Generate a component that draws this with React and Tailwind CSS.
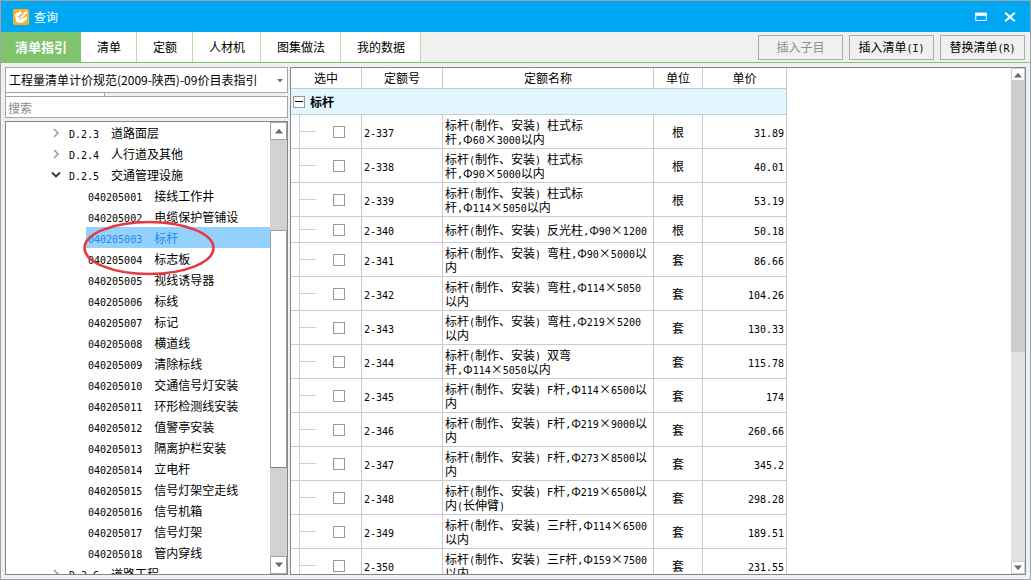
import React, { useState } from "react";

const tabs = ["清单指引", "清单", "定额", "人材机", "图集做法", "我的数据"];

const tree = [
  { code: "D.2.3", name: "道路面层" },
  { code: "D.2.4", name: "人行道及其他" },
  {
    code: "D.2.5",
    name: "交通管理设施",
    children: [
      ["040205001", "接线工作井"],
      ["040205002", "电缆保护管铺设"],
      ["040205003", "标杆"],
      ["040205004", "标志板"],
      ["040205005", "视线诱导器"],
      ["040205006", "标线"],
      ["040205007", "标记"],
      ["040205008", "横道线"],
      ["040205009", "清除标线"],
      ["040205010", "交通信号灯安装"],
      ["040205011", "环形检测线安装"],
      ["040205012", "值警亭安装"],
      ["040205013", "隔离护栏安装"],
      ["040205014", "立电杆"],
      ["040205015", "信号灯架空走线"],
      ["040205016", "信号机箱"],
      ["040205017", "信号灯架"],
      ["040205018", "管内穿线"],
    ],
  },
  { code: "D.2.6", name: "道路工程" },
];

const rows = [
  ["2-337", "标杆(制作、安装) 柱式标\n杆,Φ60×3000以内", "根", "31.89"],
  ["2-338", "标杆(制作、安装) 柱式标\n杆,Φ90×5000以内", "根", "40.01"],
  ["2-339", "标杆(制作、安装) 柱式标\n杆,Φ114×5050以内", "根", "53.19"],
  ["2-340", "标杆(制作、安装) 反光柱,Φ90×1200", "根", "50.18"],
  ["2-341", "标杆(制作、安装) 弯柱,Φ90×5000以\n内", "套", "86.66"],
  ["2-342", "标杆(制作、安装) 弯柱,Φ114×5050\n以内", "套", "104.26"],
  ["2-343", "标杆(制作、安装) 弯柱,Φ219×5200\n以内", "套", "130.33"],
  ["2-344", "标杆(制作、安装) 双弯\n杆,Φ114×5050以内", "套", "115.78"],
  ["2-345", "标杆(制作、安装) F杆,Φ114×6500以\n内", "套", "174"],
  ["2-346", "标杆(制作、安装) F杆,Φ219×9000以\n内", "套", "260.66"],
  ["2-347", "标杆(制作、安装) F杆,Φ273×8500以\n内", "套", "345.2"],
  ["2-348", "标杆(制作、安装) F杆,Φ219×6500以\n内(长伸臂)", "套", "298.28"],
  ["2-349", "标杆(制作、安装) 三F杆,Φ114×6500\n以内", "套", "189.51"],
  ["2-350", "标杆(制作、安装) 三F杆,Φ159×7500\n以内", "套", "231.55"],
];

// Half-width runs are set in a monospaced face, half as wide as a Chinese character.
function Mixed({ text }) {
  return text.split(/([\x20-\x7e]+)/).map((part, i) =>
    i % 2 ? (
      <span key={i} className="font-['DejaVu_Sans_Mono',monospace] text-[10px] leading-none">
        {part}
      </span>
    ) : (
      part
    )
  );
}

function Arrow({ up }) {
  return (
    <svg viewBox="0 0 10 6" className="h-[6px] w-[10px]" fill="#6b6b6b" aria-hidden="true">
      <path d={up ? "M1 5.5 5 .8 9 5.5z" : "M1 .5 5 5.2 9 .5z"} />
    </svg>
  );
}

function Chevron({ open }) {
  return (
    <svg viewBox="0 0 10 10" className="h-[10px] w-[10px]" fill="none" aria-hidden="true">
      {open ? (
        <path d="M1 2.5 5 6.5 9 2.5" stroke="#333" strokeWidth="1.8" />
      ) : (
        <path d="M3 1 7 5 3 9" stroke="#999" strokeWidth="1.5" />
      )}
    </svg>
  );
}

function ToolButton({ children, disabled }) {
  return (
    <button
      disabled={disabled}
      className="h-[25px] w-[85px] border border-[#adadad] bg-[#f0f0f0] text-black disabled:text-[#8f8f8f]"
    >
      {children}
    </button>
  );
}

function TreePanel() {
  const [selected, setSelected] = useState("040205003");
  return (
    <div className="relative mt-[3px] flex min-h-0 flex-1 border border-[#828790] bg-white">
      <ul className="min-w-0 flex-1 overflow-hidden">
        {tree.map((node) => (
          <li key={node.code}>
            <button className="flex h-[21px] w-full items-center pl-[45px] whitespace-nowrap">
              <Chevron open={!!node.children} />
              <span className="ml-2">
                <Mixed text={node.code} />
              </span>
              <span className="ml-3">{node.name}</span>
            </button>
            {node.children && (
              <ul className="pl-20">
                {node.children.map(([code, name]) => (
                  <li key={code}>
                    <button
                      onClick={() => setSelected(code)}
                      className={
                        code === selected
                          ? "flex h-[21px] w-full items-center gap-3 bg-[#94d1ff] pl-[2px] whitespace-nowrap text-[#1a8cf0]"
                          : "flex h-[21px] w-full items-center gap-3 pl-[2px] whitespace-nowrap"
                      }
                    >
                      <span>
                        <Mixed text={code} />
                      </span>
                      <span>{name}</span>
                    </button>
                  </li>
                ))}
              </ul>
            )}
          </li>
        ))}
      </ul>
      <div className="flex w-[17px] shrink-0 flex-col bg-[#d2d2d2]">
        <button aria-label="向上滚动" className="flex h-[18px] items-center justify-center border border-[#a5a5a5] bg-white">
          <Arrow up />
        </button>
        <div className="flex-[91]" />
        <div className="flex-[237] border border-[#a0a0a0] border-b-[#808080] bg-white" />
        <div className="flex-[89]" />
        <button aria-label="向下滚动" className="flex h-[18px] items-center justify-center border border-[#a5a5a5] bg-white">
          <Arrow />
        </button>
      </div>
      <svg
        viewBox="0 0 134 56"
        className="pointer-events-none absolute top-[98px] left-[76px] h-[56px] w-[134px]"
        fill="none"
        aria-hidden="true"
      >
        <ellipse cx="67" cy="28" rx="64.5" ry="26" stroke="#e8383d" strokeWidth="2.6" />
      </svg>
    </div>
  );
}

function QuotaTable() {
  const head = "h-[21px] border-r border-b border-[#c8ccd0] p-0 font-normal";
  const cell = "border-r border-b border-[#c8ccd0] p-0";
  return (
    <table className="w-[496px] shrink-0 table-fixed border-separate border-spacing-0 self-start">
      <colgroup>
        <col className="w-[71px]" />
        <col className="w-[81px]" />
        <col className="w-[211px]" />
        <col className="w-[49px]" />
        <col className="w-[84px]" />
      </colgroup>
      <thead>
        <tr>
          <th className={head}>选中</th>
          <th className={head}>定额号</th>
          <th className={head}>定额名称</th>
          <th className={head}>单位</th>
          <th className={head}>单价</th>
        </tr>
      </thead>
      <tbody>
        <tr>
          <td colSpan={5} className="h-[26px] border-r border-b border-[#c8ccd0] bg-[#e1f6fe] p-0">
            <div className="flex items-center pl-[2px]">
              <button aria-label="折叠" className="flex h-3 w-3 items-center justify-center border border-[#999] bg-white">
                <span className="h-px w-2 bg-black" />
              </button>
              <span className="ml-[5px] font-bold">标杆</span>
            </div>
          </td>
        </tr>
        {rows.map(([code, name, unit, price]) => (
          <tr key={code}>
            <td className={cell}>
              <div
                className={
                  name.includes("\n")
                    ? "ml-2 flex h-[33px] items-center border-l border-[#d0d0d0]"
                    : "ml-2 flex h-[25px] items-center border-l border-[#d0d0d0]"
                }
              >
                <span className="h-px w-4 bg-[#d0d0d0]" />
                <input
                  type="checkbox"
                  aria-label={code}
                  className="ml-[17px] h-3 w-3 appearance-none border border-[#999] bg-white checked:bg-[#00a8f3]"
                />
              </div>
            </td>
            <td className={cell + " pl-[2px]"}>
              <Mixed text={code} />
            </td>
            <td className={cell + " pl-[2px] leading-[14px] whitespace-pre"}>
              <Mixed text={name} />
            </td>
            <td className={cell + " text-center"}>{unit}</td>
            <td className={cell + " pr-[2px] text-right"}>
              <Mixed text={price} />
            </td>
          </tr>
        ))}
      </tbody>
    </table>
  );
}

export default function App() {
  const [active, setActive] = useState(tabs[0]);
  return (
    <div className="flex h-screen flex-col overflow-hidden border border-[#a0a4a8] bg-[#f0f0f0] font-['Noto_Sans_CJK_SC',sans-serif] text-[12px] leading-[16px] text-black">
      <header className="flex h-[31px] shrink-0 items-center bg-[#00a8f3] pr-3 pl-3 text-white">
        <svg viewBox="0 0 16 16" className="h-4 w-4" aria-hidden="true">
          <rect width="16" height="16" rx="2" fill="#f5b02e" />
          <path d="M1.5 5.5 7.5 2l1.5 2-3.5 4L7 9.5 13.5 7l.5 3-5 4-5.5-.8z" fill="#fff" />
          <path d="M6 9.5 12.8 1.8l1.8 1.6L8 10.5z" fill="#fff" />
          <path d="M5 8.2 10.4 3.8M6.2 10.8 12.6 7" stroke="#f0a020" strokeWidth=".9" />
        </svg>
        <h1 className="ml-[5px] flex-1">查询</h1>
        <button aria-label="最大化" className="mr-[17px]">
          <svg viewBox="0 0 12 10" className="h-[10px] w-3" fill="none" aria-hidden="true">
            <path d="M.75 1v7.5h10.5V1" stroke="#fff" />
            <path d="M.25 2.2h11.5" stroke="#fff" strokeWidth="3.2" />
          </svg>
        </button>
        <button aria-label="关闭" className="mr-[2px]">
          <svg viewBox="0 0 12 10" className="h-[10px] w-3" fill="none" aria-hidden="true">
            <path d="m1.2.8 9.6 8.4m0-8.4-9.6 8.4" stroke="#fff" strokeWidth="2" />
          </svg>
        </button>
      </header>

      <div className="flex h-[31px] shrink-0 items-center border-b border-[#7fc66a]">
        <nav className="flex h-full flex-1">
          {tabs.map((tab) => (
            <button
              key={tab}
              onClick={() => setActive(tab)}
              className={
                tab === active
                  ? "bg-[#7fc46c] px-[14px] text-[13px] font-bold text-white"
                  : "border-r border-[#b5e0a8] bg-white pr-[15px] pl-4"
              }
            >
              {tab}
            </button>
          ))}
        </nav>
        <div className="flex gap-[6px] pr-[5px]">
          <ToolButton disabled>插入子目</ToolButton>
          <ToolButton>
            <Mixed text="插入清单(I)" />
          </ToolButton>
          <ToolButton>
            <Mixed text="替换清单(R)" />
          </ToolButton>
        </div>
      </div>

      <main className="flex min-h-0 flex-1 gap-[2px] px-1 pt-1 pb-1">
        <aside className="flex w-[283px] shrink-0 flex-col">
          <div className="relative shrink-0">
            <select
              aria-label="计价规范"
              className="block h-[26px] w-full appearance-none border border-[#a5a5a5] bg-white pl-[3px]"
            >
              <option>工程量清单计价规范(2009-陕西)-09价目表指引</option>
            </select>
            <svg viewBox="0 0 6 4" className="pointer-events-none absolute top-3 right-[5px] h-1 w-[6px]" fill="#777" aria-hidden="true">
              <path d="M0 0h6L3 3.5z" />
            </svg>
          </div>
          <div className="h-[3px] w-[100px] shrink-0 border-r border-l border-[#a5a5a5] bg-white" />
          <input
            aria-label="搜索"
            placeholder="搜索"
            className="h-[22px] w-full shrink-0 border border-[#a5a5a5] bg-white px-[2px] placeholder:text-[#888]"
          />
          <TreePanel />
        </aside>
        <section className="flex min-w-0 flex-1 justify-between overflow-hidden border border-[#828790] bg-white">
          <QuotaTable />
          <div className="flex w-[14px] shrink-0 flex-col bg-[#e2e2e2]">
            <button aria-label="向上滚动" className="flex h-[13px] items-center justify-center border border-[#d0d0d0] bg-white">
              <Arrow up />
            </button>
            <div className="flex-[270] bg-[#cdcdcd]" />
            <div className="flex-[209]" />
            <button aria-label="向下滚动" className="flex h-[13px] items-center justify-center border border-[#d0d0d0] bg-white">
              <Arrow />
            </button>
          </div>
        </section>
      </main>
    </div>
  );
}
